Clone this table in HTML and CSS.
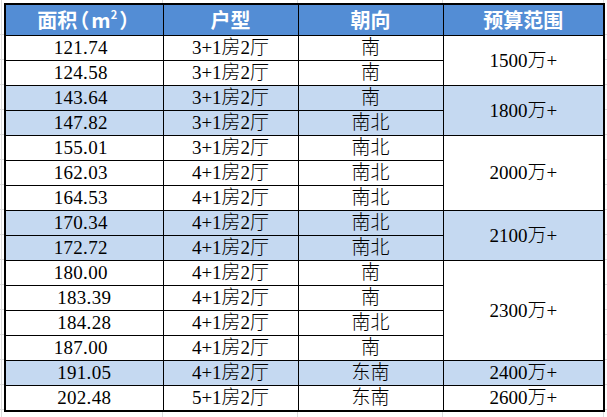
FILE: index.html
```html
<!DOCTYPE html>
<html lang="zh-CN">
<head>
<meta charset="utf-8">
<title>房源预算表</title>
<link rel="stylesheet" href="styles.css">
</head>
<body>
<table class="sheet">
  <colgroup>
    <col class="c-area">
    <col class="c-type">
    <col class="c-dir">
    <col class="c-budget">
  </colgroup>
  <thead>
    <tr class="head">
      <th><span class="unit-title">面积<span class="paren">（</span>m<sup>2</sup><span class="paren">）</span></span></th>
      <th>户型</th>
      <th>朝向</th>
      <th>预算范围</th>
    </tr>
  </thead>
  <tbody>
    <tr><td class="num">121.74</td><td>3+1房2厅</td><td>南</td><td class="budget" rowspan="2">1500万+</td></tr>
    <tr><td class="num">124.58</td><td>3+1房2厅</td><td>南</td></tr>
    <tr class="hl"><td class="num">143.64</td><td>3+1房2厅</td><td>南</td><td class="budget" rowspan="2">1800万+</td></tr>
    <tr class="hl"><td class="num">147.82</td><td>3+1房2厅</td><td>南北</td></tr>
    <tr><td class="num">155.01</td><td>3+1房2厅</td><td>南北</td><td class="budget" rowspan="3">2000万+</td></tr>
    <tr><td class="num">162.03</td><td>4+1房2厅</td><td>南北</td></tr>
    <tr><td class="num">164.53</td><td>4+1房2厅</td><td>南北</td></tr>
    <tr class="hl"><td class="num">170.34</td><td>4+1房2厅</td><td>南北</td><td class="budget" rowspan="2">2100万+</td></tr>
    <tr class="hl"><td class="num">172.72</td><td>4+1房2厅</td><td>南北</td></tr>
    <tr><td class="num">180.00</td><td>4+1房2厅</td><td>南</td><td class="budget" rowspan="4">2300万+</td></tr>
    <tr><td class="num shift">183.39</td><td>4+1房2厅</td><td>南</td></tr>
    <tr><td class="num shift">184.28</td><td>4+1房2厅</td><td>南北</td></tr>
    <tr><td class="num">187.00</td><td>4+1房2厅</td><td>南</td></tr>
    <tr class="hl"><td class="num shift">191.05</td><td>4+1房2厅</td><td>东南</td><td class="budget">2400万+</td></tr>
    <tr><td class="num shift">202.48</td><td>5+1房2厅</td><td>东南</td><td class="budget">2600万+</td></tr>
  </tbody>
</table>
</body>
</html>
```

FILE: styles.css
```css
html {
  background-color: #ffffff;
}

body {
  margin: 0;
  padding: 3px 0 0 4px;
  min-height: 417px;
  box-sizing: border-box;
  background-color: #ffffff;
  background-image:
    linear-gradient(to right, transparent 1px, #dcdcdc 1px, #dcdcdc 2px, transparent 2px),
    linear-gradient(to right, transparent 162px, #dcdcdc 162px, #dcdcdc 163px, transparent 163px),
    linear-gradient(to right, transparent 297px, #dcdcdc 297px, #dcdcdc 298px, transparent 298px),
    linear-gradient(to right, transparent 442px, #dcdcdc 442px, #dcdcdc 443px, transparent 443px),
    linear-gradient(to right, transparent 603px, #dcdcdc 603px, #dcdcdc 604px, transparent 604px),
    repeating-linear-gradient(to bottom, transparent 0, transparent 24px, #dcdcdc 24px, #dcdcdc 25px);
  background-position: 0 0, 0 0, 0 0, 0 0, 0 0, 0 10px;
  font-family: "Liberation Serif", "Noto Sans CJK SC", serif;
  color: #000000;
}

.sheet {
  border-collapse: collapse;
  table-layout: fixed;
  width: 599px;
  border: 2px solid #000000;
  background-color: #ffffff;
}

.c-area { width: 158px; }
.c-type { width: 135px; }
.c-dir { width: 145px; }
.c-budget { width: 161px; }

.sheet th,
.sheet td {
  border: 1px solid #000000;
  padding: 0;
  text-align: center;
  vertical-align: middle;
  white-space: nowrap;
}

.head th {
  height: 30px;
  background-color: #538dd5;
  color: #ffffff;
  font-family: "Noto Sans CJK SC", sans-serif;
  font-weight: 700;
  font-size: 20px;
  line-height: 30px;
}

.head .paren {
  font-feature-settings: "halt" 1;
  padding: 0 2px;
}

.head sup {
  font-size: 11px;
  line-height: 0;
  vertical-align: 9px;
}

.sheet td {
  height: 24px;
  font-size: 19px;
  font-weight: 300;
  line-height: 24px;
  font-family: "Liberation Serif", "Noto Sans CJK SC", serif;
}

.sheet td.num {
  letter-spacing: 0.3px;
  padding-right: 7px;
}

.sheet td.num.shift {
  padding-right: 0;
}

.hl td {
  background-color: #c5d9f1;
}

tr.hl td.budget {
  background-color: #c5d9f1;
}
```
